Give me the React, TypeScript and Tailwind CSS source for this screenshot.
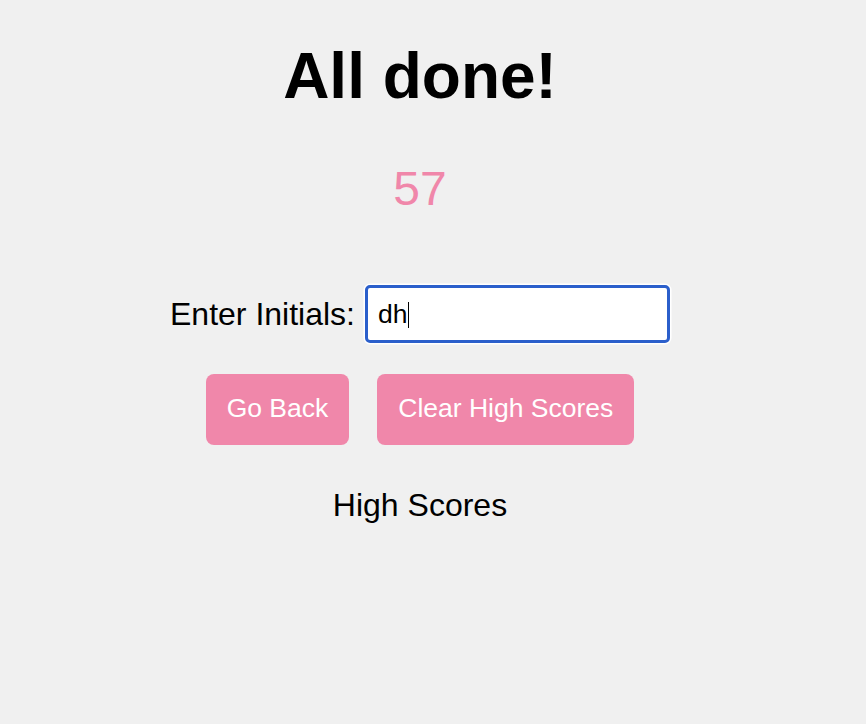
import React from "react";

export default function App() {
  return (
    <div
      className="min-h-screen w-full bg-[#f0f0f0] text-black"
      style={{ fontFamily: '"Liberation Sans", Arial, sans-serif' }}
    >
      <div className="flex w-[840px] flex-col items-center">
        <h1 className="mt-[44px] text-[64px] font-bold leading-none">All done!</h1>
        <p className="mt-[57px] text-[48px] leading-none text-[#f087aa]">57</p>
        <div className="mt-[72px] flex items-center">
          <label htmlFor="initials" className="text-[32px] leading-none">
            Enter Initials:
          </label>
          <div className="relative ml-[10px]">
            <input
              id="initials"
              type="text"
              defaultValue="dh"
              className="block h-[58px] w-[305px] rounded-[5px] border-[3px] border-[#2b5fcb] bg-white px-[10px] text-[26.5px] leading-none text-black caret-transparent shadow-[0_0_0_1.5px_#ffffff] outline-none"
            />
            <span className="pointer-events-none absolute left-[43px] top-[17px] h-[26px] w-[1.5px] bg-black" />
          </div>
        </div>
        <div className="mt-[31px] flex gap-[28px]">
          <button className="flex h-[71px] items-center rounded-[8px] bg-[#f087aa] px-[21px] pb-[3px] text-[26.5px] leading-none text-white">
            Go Back
          </button>
          <button className="flex h-[71px] items-center rounded-[8px] bg-[#f087aa] px-[21px] pb-[3px] text-[26.5px] leading-none text-white">
            Clear High Scores
          </button>
        </div>
        <h2 className="mt-[44px] text-[32px] leading-none">High Scores</h2>
      </div>
    </div>
  );
}
